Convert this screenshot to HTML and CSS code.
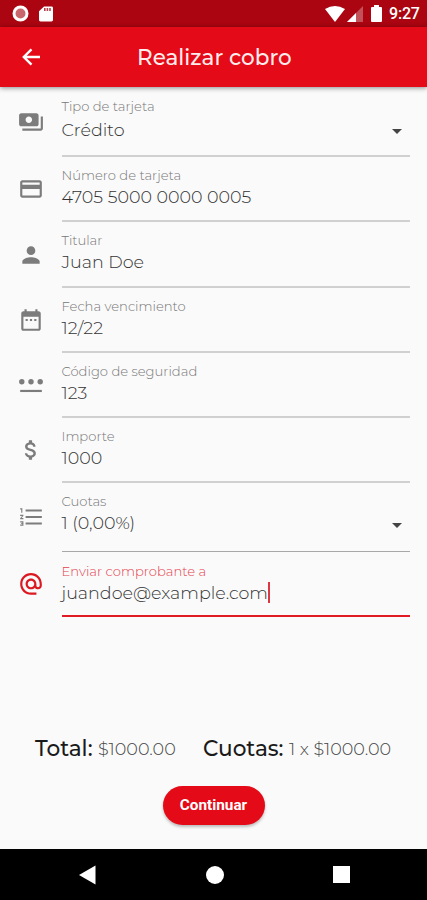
FILE: index.html
```html
<!DOCTYPE html>
<html lang="es">
<head>
<meta charset="utf-8">
<title>Realizar cobro</title>
<link rel="stylesheet" href="styles.css">
</head>
<body>
<div class="screen">
  <div class="status">
    <svg class="rec" width="17" height="17" viewBox="0 0 17 17"><circle cx="8.500" cy="8.500" r="6.500" fill="#c9666c" stroke="#fff" stroke-width="3"/></svg>
    <svg class="sd" width="14" height="16" viewBox="0 0 14 17" preserveAspectRatio="none"><path fill="#fff" d="M5 .5h7.500q1.500 0 1.500 1.500v13q0 1.500-1.500 1.500h-11Q0 16.500 0 15V5.500z"/><path fill="#b5434b" d="M5 2.200h1.600v3H5zm2.600 0h1.600v3H7.600zm2.600 0h1.600v3h-1.600z"/></svg>
    <svg class="wifi" width="20" height="16" viewBox="0 0 20 16"><path fill="#fff" d="M0 3Q10-3 20 3L10 16z"/></svg>
    <svg class="signal" width="16" height="16" viewBox="0 0 16 16"><path fill="#c2525a" d="M16 0v16H0z"/><path fill="#fff" d="M9 7v9H0z"/></svg>
    <svg class="battery" width="11" height="17" viewBox="0 0 11 17"><path fill="#fff" d="M3 0h5v2h2q1 0 1 1v13q0 1-1 1H1q-1 0-1-1V3q0-1 1-1h2z"/></svg>
    <span class="clock">9:27</span>
  </div>
  <header class="bar">
    <svg class="back" width="24" height="24" viewBox="0 0 24 24"><path fill="none" stroke="#fff" stroke-width="2.400" d="M21 12H5M12.500 4.300L4.800 12l7.700 7.700"/></svg>
    <h1 class="title">Realizar cobro</h1>
  </header>
  <main class="form">
    <div class="row tall">
      <svg class="icon" viewBox="0 0 24 24"><path d="M19 14V6c0-1.100-.9-2-2-2H3c-1.100 0-2 .9-2 2v8c0 1.100.9 2 2 2h14c1.100 0 2-.9 2-2zm-9-1c-1.660 0-3-1.340-3-3s1.340-3 3-3 3 1.340 3 3-1.340 3-3 3zm13-6v11c0 1.100-.9 2-2 2H4v-2h17V7h2z"/></svg>
      <div class="field"><label class="label">Tipo de tarjeta</label><div class="value">Crédito<i class="caret"></i></div></div>
    </div>
    <div class="row">
      <svg class="icon" viewBox="0 0 24 24"><path d="M20 4H4c-1.110 0-1.990.89-1.990 2L2 18c0 1.110.89 2 2 2h16c1.110 0 2-.89 2-2V6c0-1.110-.89-2-2-2zm0 14H4v-6h16v6zm0-10H4V6h16v2z"/></svg>
      <div class="field"><label class="label">Número de tarjeta</label><div class="value">4705 5000 0000 0005</div></div>
    </div>
    <div class="row plus">
      <svg class="icon" viewBox="0 0 24 24"><path d="M12 12c2.210 0 4-1.790 4-4s-1.790-4-4-4-4 1.790-4 4 1.790 4 4 4zm0 2c-2.670 0-8 1.340-8 4v2h16v-2c0-2.660-5.330-4-8-4z"/></svg>
      <div class="field"><label class="label">Titular</label><div class="value">Juan Doe</div></div>
    </div>
    <div class="row">
      <svg class="icon" viewBox="0 0 24 24"><path d="M9 11H7v2h2v-2zm4 0h-2v2h2v-2zm4 0h-2v2h2v-2zm2-7h-1V2h-2v2H8V2H6v2H5c-1.110 0-1.990.9-1.990 2L3 20c0 1.100.89 2 2 2h14c1.100 0 2-.9 2-2V6c0-1.100-.9-2-2-2zm0 16H5V9h14v11z"/></svg>
      <div class="field"><label class="label">Fecha vencimiento</label><div class="value">12/22</div></div>
    </div>
    <div class="row">
      <svg class="icon" viewBox="0 0 24 24"><circle cx="3.500" cy="9" r="2.500"/><circle cx="12" cy="9" r="2.500"/><circle cx="20.500" cy="9" r="2.500"/><path d="M2 16.500h20v2H2z"/></svg>
      <div class="field"><label class="label">Código de seguridad</label><div class="value">123</div></div>
    </div>
    <div class="row">
      <svg class="icon" viewBox="0 0 24 24"><path d="M11.800 10.900c-2.270-.59-3-1.200-3-2.150 0-1.090 1.010-1.850 2.700-1.850 1.780 0 2.440.85 2.500 2.100h2.210c-.07-1.720-1.120-3.300-3.210-3.810V3h-3v2.160c-1.940.42-3.500 1.680-3.500 3.610 0 2.310 1.910 3.460 4.700 4.130 2.500.6 3 1.480 3 2.410 0 .69-.49 1.790-2.700 1.790-2.060 0-2.870-.92-2.980-2.100h-2.200c.12 2.190 1.760 3.420 3.680 3.830V21h3v-2.150c1.950-.37 3.500-1.500 3.500-3.550 0-2.840-2.430-3.810-4.700-4.400z"/></svg>
      <div class="field"><label class="label">Importe</label><div class="value">1000</div></div>
    </div>
    <div class="row quota">
      <svg class="icon" viewBox="0 0 24 24"><path d="M2 17h2v.5H3v1h1v.5H2v1h3v-4H2v1zm1-9h1V4H2v1h1v3zm-1 3h1.800L2 13.100v.9h3v-1H3.200L5 10.900V10H2v1zm5-6v2h15V5H7zm0 14h15v-2H7v2zm0-6h15v-2H7v2z"/></svg>
      <div class="field"><label class="label">Cuotas</label><div class="value">1 (0,00%)<i class="caret"></i></div></div>
    </div>
    <div class="row active">
      <svg class="icon" viewBox="0 0 24 24"><path d="M12 1.950c-5.520 0-10 4.480-10 10s4.480 10 10 10h5v-2h-5c-4.340 0-8-3.660-8-8s3.660-8 8-8 8 3.660 8 8v1.430c0 .79-.71 1.570-1.500 1.570s-1.500-.78-1.500-1.570v-1.430c0-2.760-2.240-5-5-5s-5 2.240-5 5 2.240 5 5 5c1.380 0 2.640-.56 3.540-1.470.65.89 1.770 1.470 2.960 1.470 1.970 0 3.500-1.600 3.500-3.570v-1.430c0-5.520-4.480-10-10-10zm0 13c-1.660 0-3-1.340-3-3s1.340-3 3-3 3 1.340 3 3-1.340 3-3 3z"/></svg>
      <div class="field"><label class="label">Enviar comprobante a</label><div class="value">juandoe@example.com<i class="cursor"></i></div></div>
    </div>
  </main>
  <section class="totals">
    <span class="key k1">Total:</span><span class="amount a1">$1000.00</span>
    <span class="key k2">Cuotas:</span><span class="amount">1 x $1000.00</span>
  </section>
  <div class="action"><button class="button">Continuar</button></div>
  <nav class="nav">
    <svg width="17" height="20" viewBox="0 0 17 20"><path fill="#fff" d="M16.500.5v19L0 10z"/></svg>
    <svg width="18" height="18" viewBox="0 0 18 18"><circle cx="9" cy="9" r="9" fill="#fff"/></svg>
    <svg width="17" height="17" viewBox="0 0 17 17"><path fill="#fff" d="M0 0h17v17H0z"/></svg>
  </nav>
</div>
</body>
</html>
```
FILE: styles.css
```css
* { box-sizing: border-box; }
body { margin: 0; background: #fafafa; font-family: Montserrat, Inter, sans-serif; }
.screen { width: 427px; height: 900px; display: flex; flex-direction: column; overflow: hidden; }

.status { height: 27px; flex: none; background: #aa0510; display: flex; align-items: center; padding: 0 7px 0 12px; }
.sd { margin-left: 10px; }
.wifi { margin-left: auto; }
.signal { margin-left: 2px; }
.battery { margin-left: 8px; }
.clock { width: 31px; margin-left: 7px; font: 500 16px/28px Roboto, sans-serif; color: #fff; letter-spacing: -.2px; white-space: nowrap; }

.bar { height: 60px; flex: none; background: #e50a17; display: flex; align-items: center; padding-left: 19px; box-shadow: 0 1px 5px rgba(0, 0, 0, .45); position: relative; }
.title { margin: 0 0 0 94px; font-size: 21.500px; line-height: 28px; font-weight: 500; color: #ffecec; white-space: nowrap; }

.form { flex: none; }
.row { height: 65px; padding: 0 17px 0 18px; display: flex; align-items: center; }
.tall { height: 70px; }
.plus { height: 66px; }
.quota { height: 69px; }
.icon { width: 26px; height: 26px; flex: none; fill: #7c7c7c; margin: -1px 17.500px 0 0; }
.field { flex: 1; align-self: stretch; border-bottom: 2px solid #d0d0d0; padding-top: 10px; }
.quota .field { border-bottom: 1px solid #a8a8a8; }
.label { display: block; height: 17px; font-size: 13.150px; line-height: 17px; color: #777; font-weight: 300; }
.value { height: 26px; font-size: 17.500px; line-height: 26px; color: #333; font-weight: 300; display: flex; align-items: center; white-space: nowrap; }
.tall .field, .active .field { padding-top: 11px; }
.tall .value { height: 30px; }
.active .value { height: 25px; }
.caret { margin-left: auto; margin-right: 8px; border: 5px solid transparent; border-top-color: #444; border-bottom: 0; }
.quota .caret { position: relative; top: 2px; }
.tall .caret { position: relative; top: 1px; }
.active .icon { fill: #dc1821; }
.active .label { color: #e5404d; }
.active .field { border-color: #e01b24; }
.cursor { width: 2px; height: 21px; background: #dc3844; }

.totals { margin-top: 114px; height: 34px; flex: none; padding-left: 35px; display: flex; align-items: center; white-space: nowrap; }
.key { font-size: 21.600px; color: #1a1a1a; font-weight: 500; }
.amount { font-size: 17.600px; color: #444; font-weight: 300; line-height: 20px; margin-top: 2px; }
.k1 { width: 63px; }
.a1 { width: 105px; }
.k2 { width: 86px; }

.action { margin-top: 21px; display: flex; justify-content: center; }
.button { width: 102px; height: 39px; border: 0; border-radius: 20px; background: #e50a17; color: #fff; font: 700 15.300px/39px Roboto, sans-serif; padding: 0; box-shadow: 0 2px 3px rgba(0, 0, 0, .25); }
.nav { margin-top: auto; height: 51px; flex: none; background: #000; display: flex; align-items: center; padding: 0 77px 0 79px; justify-content: space-between; }
```
